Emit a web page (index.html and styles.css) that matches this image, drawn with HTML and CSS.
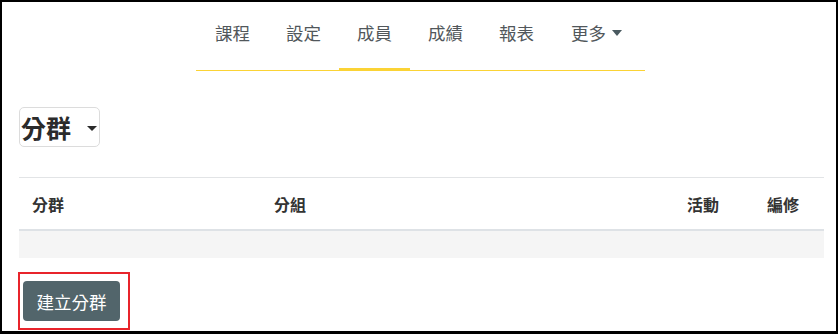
FILE: index.html
```html
<!DOCTYPE html>
<html lang="zh-Hant">
<head>
<meta charset="utf-8">
<link rel="stylesheet" href="styles.css">
</head>
<body>
<div class="frame">
  <nav class="nav">
    <ul class="tabs">
      <li class="tab">課程</li>
      <li class="tab">設定</li>
      <li class="tab active">成員</li>
      <li class="tab">成績</li>
      <li class="tab">報表</li>
      <li class="tab more">更多<span class="caret"></span></li>
    </ul>
  </nav>
  <main class="content">
    <div class="title-box">
      <h1 class="title">分群</h1>
      <span class="title-caret"></span>
    </div>
    <div class="table">
      <div class="thead">
        <div class="th">分群</div>
        <div class="th">分組</div>
        <div class="th">活動</div>
        <div class="th">編修</div>
      </div>
      <div class="empty-row"></div>
    </div>
    <div class="highlight">
      <button class="btn">建立分群</button>
    </div>
  </main>
</div>
</body>
</html>
```
FILE: styles.css
```css
* { box-sizing: border-box; }
html, body { margin: 0; padding: 0; background: #fff; }
body { font-family: "Noto Sans CJK TC", "Noto Sans", sans-serif; color: #333; }
.frame {
  width: 838px;
  height: 334px;
  border: 2px solid #000;
  border-bottom-width: 3px;
  overflow: hidden;
}
.nav { display: flex; justify-content: center; }
.tabs {
  list-style: none;
  margin: 0 0 0 3px;
  padding: 0 4px 0 1px;
  display: flex;
  border-bottom: 1px solid #fbd335;
}
.tab {
  width: 71px;
  padding: 19px 0 23px;
  text-align: center;
  font-size: 17.5px;
  line-height: 24px;
  color: #51575b;
  border-bottom: 2px solid transparent;
}
.tab.active { border-bottom-color: #fbd335; }
.tab.more {
  width: auto;
  padding-left: 19px;
  padding-right: 19px;
  display: flex;
  align-items: center;
}
.caret {
  display: inline-block;
  margin-left: 6px;
  width: 0; height: 0;
  border-left: 5.5px solid transparent;
  border-right: 5.5px solid transparent;
  border-top: 6px solid #4a5a60;
}
.content { padding: 36px 12px 0 17px; }
.title-box {
  display: inline-flex;
  align-items: center;
  height: 40px;
  width: 81px;
  border: 1px solid #dcdcdc;
  border-radius: 5px;
  padding-left: 1px;
}
.title {
  margin: 0;
  font-size: 25px;
  line-height: 30px;
  font-weight: 700;
  color: #2b2b2b;
}
.title-caret {
  margin-left: 16px;
  margin-top: 2px;
  width: 0; height: 0;
  border-left: 5px solid transparent;
  border-right: 5px solid transparent;
  border-top: 5px solid #2b2b2b;
}
.table { margin-top: 30px; border-top: 1px solid #e2e4e6; }
.thead {
  display: grid;
  grid-template-columns: 242px 1fr 80px 70px;
  height: 53px;
  border-bottom: 2px solid #dee2e6;
  align-items: center;
}
.th {
  padding-left: 13px;
  font-size: 16px;
  font-weight: 700;
  color: #333;
}
.empty-row { height: 27px; background: #f5f5f5; }
.highlight {
  margin-top: 14px;
  margin-left: -1px;
  width: 112px;
  height: 58px;
  border: 2px solid #e8242b;
  padding: 7px 0 0 5px;
}
.btn {
  width: 97px;
  height: 40px;
  margin-left: -2px;
  border: 0;
  border-radius: 4px;
  background: #52656b;
  color: #fff;
  font-family: inherit;
  font-size: 17.5px;
  padding: 0;
}
```
